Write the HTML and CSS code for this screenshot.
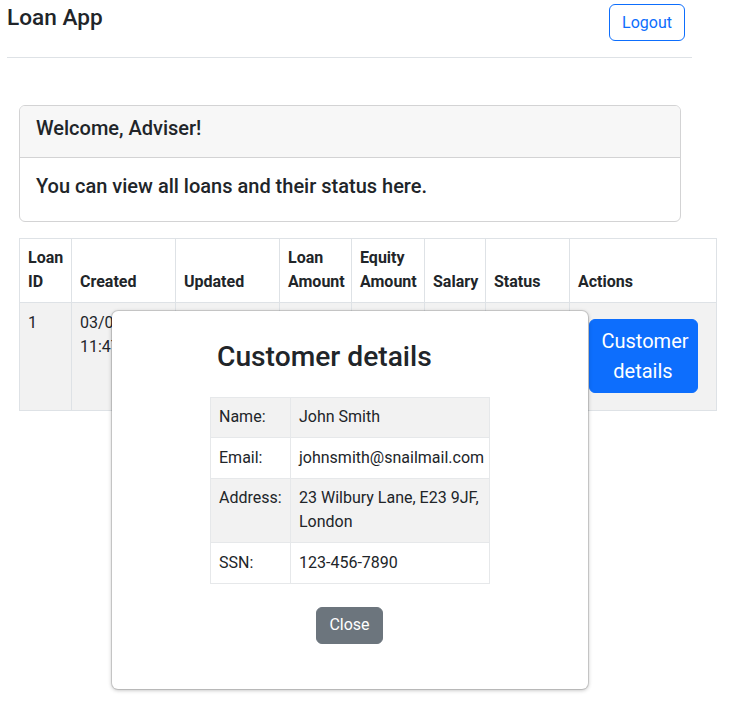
FILE: index.html
```html
<!DOCTYPE html>
<html lang="en">
<head>
<meta charset="utf-8">
<title>Loan App</title>
<link rel="stylesheet" href="styles.css">
</head>
<body>
<div class="page">
  <header class="topbar">
    <h4 class="brand">Loan App</h4>
    <button class="btn btn-outline-primary logout">Logout</button>
  </header>
  <hr class="divider">

  <main class="content">
    <section class="card">
      <div class="card-header"><h5 class="card-title">Welcome, Adviser!</h5></div>
      <div class="card-body"><h5 class="card-text">You can view all loans and their status here.</h5></div>
    </section>

    <table class="loans">
      <colgroup>
        <col class="c-id"><col class="c-created"><col class="c-updated"><col class="c-amount">
        <col class="c-equity"><col class="c-salary"><col class="c-status"><col class="c-actions">
      </colgroup>
      <thead>
        <tr>
          <th>Loan ID</th>
          <th>Created</th>
          <th>Updated</th>
          <th>Loan Amount</th>
          <th>Equity Amount</th>
          <th>Salary</th>
          <th>Status</th>
          <th>Actions</th>
        </tr>
      </thead>
      <tbody>
        <tr class="striped">
          <td>1</td>
          <td class="clip">03/04/2023, 11:47:20</td>
          <td></td>
          <td></td>
          <td></td>
          <td></td>
          <td></td>
          <td class="actions"><button class="btn btn-primary btn-details">Customer details</button></td>
        </tr>
      </tbody>
    </table>
  </main>

  <div class="modal" role="dialog" aria-modal="true">
    <div class="modal-inner">
      <h2 class="modal-title">Customer details</h2>
      <table class="details">
        <colgroup><col class="d-label"><col class="d-value"></colgroup>
        <tbody>
          <tr class="striped"><td>Name:</td><td>John Smith</td></tr>
          <tr><td>Email:</td><td>johnsmith@snailmail.com</td></tr>
          <tr class="striped"><td>Address:</td><td>23 Wilbury Lane, E23 9JF, London</td></tr>
          <tr><td>SSN:</td><td>123-456-7890</td></tr>
        </tbody>
      </table>
      <div class="modal-actions">
        <button class="btn btn-secondary">Close</button>
      </div>
    </div>
  </div>
</div>
</body>
</html>
```

FILE: styles.css
```css
* { box-sizing: border-box; }

html, body {
  margin: 0;
  padding: 0;
  background: #fff;
}

body {
  font-family: Roboto, "Liberation Sans", Arial, sans-serif;
  font-size: 16px;
  line-height: 24px;
  color: #212529;
}

.page {
  position: relative;
  width: 739px;
  min-height: 709px;
  padding: 4px 0 0 7px;
}

.topbar {
  width: 685px;
  display: flex;
  justify-content: space-between;
  align-items: flex-start;
}

.brand {
  margin: 0;
  font-size: 22.6px;
  font-weight: 500;
  line-height: 1.2;
}

.btn {
  display: inline-block;
  font-family: inherit;
  font-size: 16px;
  line-height: 24px;
  font-weight: 400;
  padding: 6px 12px;
  border: 1px solid transparent;
  border-radius: 6px;
  background: transparent;
  cursor: pointer;
  text-align: center;
}

.btn-outline-primary {
  color: #0d6efd;
  border-color: #0d6efd;
  background: #fff;
}

.logout {
  margin-right: 7px;
  height: 37px;
  padding: 5px 12px;
}

.btn-primary {
  color: #fff;
  background: #0d6efd;
  border-color: #0d6efd;
}

.btn-secondary {
  color: #fff;
  background: #6c757d;
  border-color: #6c757d;
}

.divider {
  margin: 16px 0 0 0;
  width: 685px;
  border: 0;
  border-top: 1px solid #dee2e6;
  height: 0;
}

.content {
  padding: 47px 0 0 12px;
}

.card {
  width: 662px;
  border: 1px solid #d3d3d4;
  border-radius: 6px;
  background: #fff;
  overflow: hidden;
}

.card-header {
  background: #f7f7f7;
  border-bottom: 1px solid #d3d3d4;
  padding: 10px 16px 9px;
}

.card-title,
.card-text {
  margin: 0 0 8px;
  font-size: 20px;
  font-weight: 500;
  line-height: 24px;
}

.card-body {
  padding: 16px 16px 15px;
}

.loans {
  margin-top: 16px;
  width: 697px;
  table-layout: fixed;
  border-collapse: collapse;
  border: 1px solid #dee2e6;
}

.c-id { width: 52px; }
.c-created { width: 104px; }
.c-updated { width: 104px; }
.c-amount { width: 72px; }
.c-equity { width: 73px; }
.c-salary { width: 61px; }
.c-status { width: 84px; }
.c-actions { width: 147px; }

.loans th,
.loans td {
  border: 1px solid #dee2e6;
  padding: 8px;
  text-align: left;
  overflow: hidden;
}

.loans th {
  font-weight: 700;
  vertical-align: bottom;
  padding-top: 7px;
}

.loans td {
  vertical-align: top;
}

.striped td {
  background: #f2f2f2;
}

.loans td.actions {
  text-align: center;
  vertical-align: middle;
}

.btn-details {
  display: block;
  font-size: 20px;
  line-height: 30px;
  padding: 6px 12px;
  margin: 8px auto 9px;
  width: 109px;
}

.modal {
  position: absolute;
  left: 112px;
  top: 311px;
  width: 476px;
  height: 378px;
  background: #fff;
  border-radius: 6px;
  box-shadow: 0 0 0 1px rgba(0, 0, 0, 0.12), 0 1px 4px rgba(0, 0, 0, 0.3);
  padding-top: 29px;
}

.modal-inner {
  width: 279px;
  margin-left: 98px;
}

.modal-title {
  margin: 0 0 23px;
  padding-left: 7px;
  font-size: 28.2px;
  font-weight: 500;
  line-height: 1.2;
  white-space: nowrap;
}

.details {
  width: 279px;
  table-layout: fixed;
  border-collapse: collapse;
  border: 1px solid #e6e8ea;
}

.d-label { width: 80px; }
.d-value { width: 199px; }

.details td {
  border: 1px solid #e6e8ea;
  padding: 7.5px 8px 8px;
  vertical-align: top;
}

.modal-actions {
  margin-top: 23px;
  text-align: center;
}

.modal-actions .btn {
  height: 37px;
  padding: 5px 12px;
}
```
